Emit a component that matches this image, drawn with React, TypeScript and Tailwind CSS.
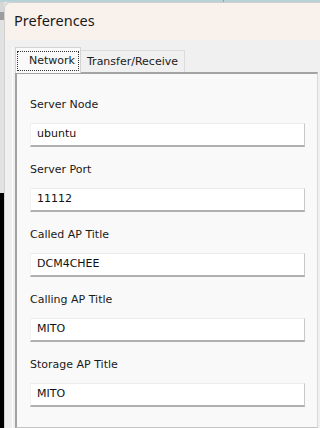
import React from "react";

const fields: { label: string; value: string }[] = [
  { label: "Server Node", value: "ubuntu" },
  { label: "Server Port", value: "11112" },
  { label: "Called AP Title", value: "DCM4CHEE" },
  { label: "Calling AP Title", value: "MITO" },
  { label: "Storage AP Title", value: "MITO" },
];

const uiFont = { fontFamily: '"DejaVu Sans", Verdana, sans-serif' };

export default function App() {
  return (
    <div className="w-[320px] h-[428px] overflow-hidden bg-[#e4e4e4] flex flex-col">
      <div className="h-[2px] flex shrink-0">
        <div className="w-[223px] bg-[#b7d3d8]" />
        <div className="w-[1px] bg-[#8aa9b0]" />
        <div className="flex-1 bg-[#b7d3d8]" />
      </div>
      <div className="flex flex-1 min-h-0">
        <div className="w-[4px] flex flex-col shrink-0">
          <div className="h-[10px] bg-[#d6d6d6]" />
          <div className="h-[8px] bg-[#9c9c9c]" />
          <div className="h-[173px] bg-[#e2e2e2]" />
          <div className="flex-1 bg-[#000000]" />
        </div>
        <div className="flex-1 flex flex-col bg-[#f0f0f0] rounded-tl-[7px] overflow-hidden border-l border-t border-[#d0d0d0]">
          <div
            className="h-[37px] shrink-0 bg-[#f9f1ec] flex items-center pl-[9px] pb-[2px] text-[14.5px] text-[#1a1a1a]"
            style={{ fontFamily: '"Noto Sans", "Open Sans", sans-serif' }}
          >
            Preferences
          </div>
          <div className="flex-1 flex min-h-0">
            <div className="w-[7px] shrink-0" />
            <div className="w-[1px] mt-[7px] bg-[#fbfbfb] shrink-0" />
            <div className="w-[2px] shrink-0" />
            <div className="flex-1 flex flex-col min-h-0">
              <div className="h-[32px] shrink-0 flex items-end" style={uiFont}>
                <div className="h-[26px] w-[66px] bg-[#f9f9f9] border border-b-0 border-[#d4d4d4] flex items-center justify-center px-[1px] pt-[1px] -mb-[1px] relative z-10">
                  <div className="w-full h-[20px] border border-dotted border-[#333] flex items-center justify-end pr-[3px] text-[11px] text-[#1a1a1a]">
                    Network
                  </div>
                </div>
                <div className="h-[22px] w-[104px] bg-[#f0f0f0] border border-b-0 border-l-0 border-[#dcdcdc] flex items-center pl-[6px] pt-[1px] text-[11px] text-[#1a1a1a]">
                  Transfer/Receive
                </div>
              </div>
              <div className="flex-1 min-h-0 bg-[#f9f9f9] border-t-2 border-l-2 border-r border-b border-t-[#a3a3a3] border-l-[#a3a3a3] border-r-[#dadada] border-b-[#c4c4c4] mr-[2px] pt-[24px] pl-[13px] pr-[12px] flex flex-col gap-[16px]" style={uiFont}>
                {fields.map((f) => (
                  <div key={f.label} className="flex flex-col gap-[11px]">
                    <div className="h-[14px] leading-[14px] text-[11px] text-[#1a1a1a]">{f.label}</div>
                    <div className="h-[24px] bg-white border-t border-l border-t-[#ececec] border-l-[#f2f2f2] border-b-2 border-r border-b-[#b0b0b0] border-r-[#c8c8c8] flex items-center pl-[6px] text-[11px] text-[#111]">
                      {f.value}
                    </div>
                  </div>
                ))}
              </div>
            </div>
          </div>
        </div>
      </div>
    </div>
  );
}
